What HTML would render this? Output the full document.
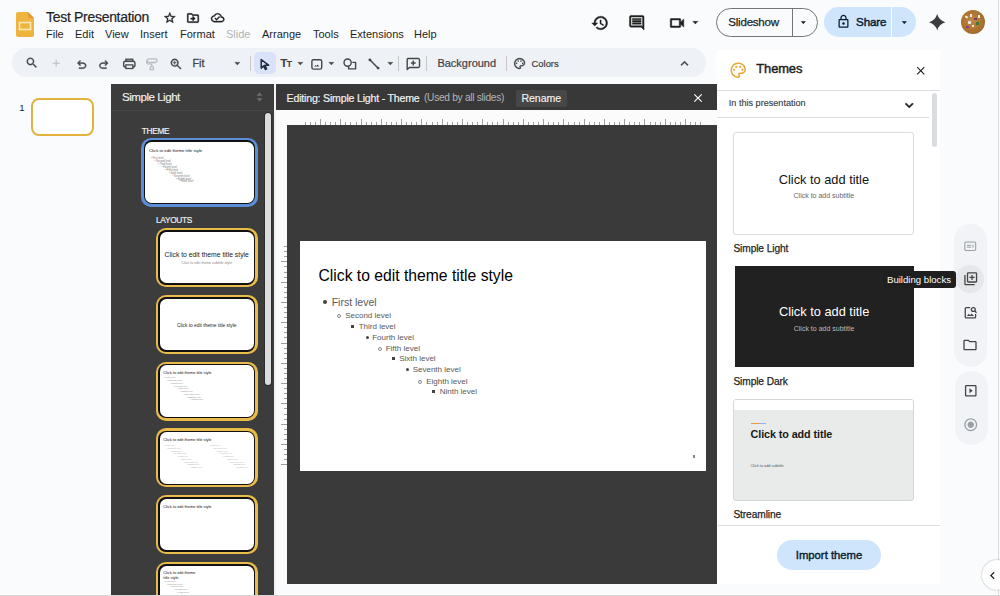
<!DOCTYPE html>
<html><head><meta charset="utf-8">
<style>
*{box-sizing:border-box;margin:0;padding:0}
html,body{width:1000px;height:596px;overflow:hidden;background:#f9fbfd;font-family:"Liberation Sans",sans-serif;color:#1f1f1f}
.a{position:absolute}
.t{position:absolute;white-space:nowrap;line-height:1}
svg{position:absolute;overflow:visible}
</style></head><body>
<!-- HEADER -->
<div id="hdr">
  <svg style="left:16px;top:12px" width="18" height="25" viewBox="0 0 18 25">
    <path d="M2 0H12L18 6V23A2 2 0 0 1 16 25H2A2 2 0 0 1 0 23V2A2 2 0 0 1 2 0Z" fill="#efb43e"/>
    <path d="M12 0L18 6H14A2 2 0 0 1 12 4Z" fill="#e39a36"/>
    <rect x="3.5" y="10.5" width="11" height="7" fill="none" stroke="#fbe9b9" stroke-width="1.6"/>
  </svg>
  <div class="t" style="left:46px;top:10px;font-size:14px;letter-spacing:-0.3px;color:#1f1f1f;-webkit-text-stroke:0.2px #1f1f1f">Test Presentation</div>
  
  <svg style="left:162.5px;top:10.9px" width="13.6" height="13.6" viewBox="0 0 24 24"><path fill="#1f1f1f" stroke="#1f1f1f" stroke-width="0.6" d="M22 9.24l-7.19-.62L12 2 9.19 8.63 2 9.24l5.46 4.73L5.82 21 12 17.27 18.18 21l-1.63-7.03L22 9.24zM12 15.4l-3.76 2.27 1-4.28-3.32-2.88 4.38-.38L12 6.1l1.71 4.04 4.38.38-3.32 2.88 1 4.28L12 15.4z"/></svg>
  <svg style="left:186px;top:10.6px" width="14" height="14" viewBox="0 0 24 24"><path fill="#1f1f1f" stroke="#1f1f1f" stroke-width="0.6" d="M20 6h-8l-2-2H4c-1.1 0-1.99.9-1.99 2L2 18c0 1.1.9 2 2 2h16c1.1 0 2-.9 2-2V8c0-1.1-.9-2-2-2zm0 12H4V6h5.17l2 2H20v10zm-7.84-6H8v2h4.16l-1.59 1.59L11.99 17 16 13.01 11.99 9l-1.41 1.41L12.16 12z"/></svg>
  <svg style="left:210.5px;top:10.6px" width="13.4" height="13.4" viewBox="0 0 24 24"><path fill="#1f1f1f" stroke="#1f1f1f" stroke-width="0.6" d="M19.35 10.04C18.67 6.59 15.640 4 12 4 9.11 4 6.6 5.64 5.35 8.04 2.34 8.36 0 10.91 0 14c0 3.31 2.69 6 6 6h13c2.76 0 5-2.24 5-5 0-2.640-2.05-4.78-4.65-4.96zM19 18H6c-2.21 0-4-1.79-4-4 0-2.05 1.53-3.76 3.56-3.97l1.07-.11.5-.95C8.08 7.14 9.94 6 12 6c2.62 0 4.88 1.86 5.39 4.43l.3 1.5 1.53.11c1.56.1 2.78 1.41 2.78 2.96 0 1.65-1.35 3-3 3zm-9-3.82l-2.09-2.09L6.5 13.5 10 17l6.010-6.01-1.41-1.41z"/></svg>
<div class="t" style="left:46px;top:29px;font-size:11px;color:#1f1f1f">File</div>
  <div class="t" style="left:75px;top:29px;font-size:11px">Edit</div>
  <div class="t" style="left:105px;top:29px;font-size:11px">View</div>
  <div class="t" style="left:140px;top:29px;font-size:11px">Insert</div>
  <div class="t" style="left:180px;top:29px;font-size:11px">Format</div>
  <div class="t" style="left:226px;top:29px;font-size:11px;color:#b0b3b8">Slide</div>
  <div class="t" style="left:262px;top:29px;font-size:11px">Arrange</div>
  <div class="t" style="left:313px;top:29px;font-size:11px">Tools</div>
  <div class="t" style="left:350px;top:29px;font-size:11px">Extensions</div>
  <div class="t" style="left:414px;top:29px;font-size:11px">Help</div>
</div>

<!-- TOOLBAR -->
<div class="a" style="left:12px;top:48px;width:694px;height:29px;border-radius:15px;background:#eef1f6"></div>
<div id="tb">
<svg style="left:25.3px;top:56.3px" width="13.7" height="13.7" viewBox="0 0 24 24"><path fill="#444746" stroke="#444746" stroke-width="0.55" d="M15.5 14h-.79l-.28-.27C15.41 12.59 16 11.11 16 9.5 16 5.910 13.09 3 9.5 3S3 5.91 3 9.5 5.91 16 9.5 16c1.61 0 3.09-.59 4.23-1.57l.27.28v.79l5 4.99L20.49 19l-4.99-5zm-6 0C7.01 14 5 11.99 5 9.5S7.01 5 9.5 5 14 7.01 14 9.5 11.99 14 9.5 14z"/></svg>
<svg style="left:50.2px;top:57.2px" width="12.3" height="12.3" viewBox="0 0 24 24"><path fill="#b9bcc1" d="M19 13h-6v6h-2v-6H5v-2h6V5h2v6h6v2z"/></svg>
<svg style="left:74.5px;top:58.1px" width="13.5" height="13.5" viewBox="0 -960 960 960"><path fill="#444746" stroke="#444746" stroke-width="22" d="M280-200v-80h284q63 0 109.5-40T720-420q0-60-46.5-100T564-560H312l104 104-56 56-200-200 200-200 56 56-104 104h252q97 0 166.5 63T800-420q0 94-69.5 157T564-200H280Z"/></svg>
<svg style="left:97.4px;top:58.1px" width="13.5" height="13.5" viewBox="0 -960 960 960"><path fill="#444746" stroke="#444746" stroke-width="22" d="M396-200q-97 0-166.5-63T160-420q0-94 69.5-157T396-640h252L544-744l56-56 200 200-200 200-56-56 104-104H396q-63 0-109.5 40T240-420q0 60 46.5 100T396-280h284v80H396Z"/></svg>
<svg style="left:120.6px;top:56.8px" width="15.6" height="13.8" viewBox="0 0 17 15"><rect x="2.9" y="4.6" width="12.3" height="6.3" rx="2" fill="none" stroke="#444746" stroke-width="1.5"/><rect x="5.3" y="2.4" width="7.6" height="2.4" fill="none" stroke="#444746" stroke-width="1.4"/><rect x="5.3" y="8.6" width="7.6" height="3.9" fill="#eef1f6" stroke="#444746" stroke-width="1.4"/></svg>
<svg style="left:144px;top:56px" width="15" height="16" viewBox="0 0 15 16"><rect x="3.2" y="2.9" width="9.8" height="3.6" rx="1.8" fill="none" stroke="#b9bcc1" stroke-width="1.3"/><path fill="none" stroke="#b9bcc1" stroke-width="1.2" d="M3.2 4.7C2.2 4.7 2.3 7.9 3.8 8H7.8V9.6"/><path fill="none" stroke="#b9bcc1" stroke-width="1.3" d="M7.8 9.8L9.4 11.8V13.6H6.2V11.8Z"/></svg>
<svg style="left:168.9px;top:56.7px" width="14.4" height="14.4" viewBox="0 0 24 24"><path fill="#444746" stroke="#444746" stroke-width="0.55" d="M15.5 14h-.79l-.28-.27C15.41 12.59 16 11.11 16 9.5 16 5.91 13.09 3 9.5 3S3 5.91 3 9.5 5.91 16 9.5 16c1.61 0 3.09-.59 4.23-1.57l.27.28v.79l5 4.99L20.49 19l-4.99-5zm-6 0C7.01 14 5 11.99 5 9.5S7.01 5 9.5 5 14 7.01 14 9.5 11.99 14 9.5 14zm.5-7H9v2H7v1h2v2h1v-2h2V9h-2z"/></svg>
<div class="t" style="left:192.5px;top:58.4px;font-size:10.8px;color:#444746;-webkit-text-stroke:0.3px #444746">Fit</div>
<svg style="left:230.7px;top:56.9px" width="12.7" height="12.7" viewBox="0 0 24 24"><path fill="#444746" stroke="#444746" stroke-width="0.55" d="M7 10l5 5 5-5z"/></svg>
<div class="a" style="left:250px;top:56px;width:1px;height:14.5px;background:#c7c7c7"></div>
<div class="a" style="left:254px;top:52px;width:22px;height:22px;border-radius:5px;background:#d9e2f8"></div>
<svg style="left:260px;top:58.5px" width="10" height="11" viewBox="0 0 10 11"><path fill="#d9e2f8" stroke="#1f2a44" stroke-width="1.5" stroke-linejoin="round" d="M1.2 0.6L8.6 6.2H4.9L6.6 9.9 5.4 10.5 3.6 6.9 1.2 9.1Z"/></svg>
<div class="t" style="left:280.2px;top:57.5px;font-size:11.8px;font-weight:700;color:#3c4043;letter-spacing:-0.9px">T<span style="font-size:9.2px">T</span></div>
<svg style="left:294px;top:56.9px" width="12.7" height="12.7" viewBox="0 0 24 24"><path fill="#444746" stroke="#444746" stroke-width="0.55" d="M7 10l5 5 5-5z"/></svg>
<svg style="left:309px;top:56.5px" width="15" height="14" viewBox="0 0 15 14"><rect x="2.9" y="2.7" width="9.8" height="9.4" rx="1.6" fill="none" stroke="#444746" stroke-width="1.4"/><path fill="#444746" d="M5.2 9.6L6.6 7.9 7.5 8.9 8.6 7.6 10.3 9.6Z"/></svg>
<svg style="left:324.6px;top:56.9px" width="12.7" height="12.7" viewBox="0 0 24 24"><path fill="#444746" stroke="#444746" stroke-width="0.55" d="M7 10l5 5 5-5z"/></svg>
<svg style="left:343px;top:58.3px" width="14" height="12" viewBox="0 0 14 12"><circle cx="4.6" cy="4.6" r="3.6" fill="none" stroke="#444746" stroke-width="1.4"/><path fill="none" stroke="#444746" stroke-width="1.4" stroke-linejoin="round" d="M9.3 4.4H12.6V10.9H5.6V8.7"/></svg>
<svg style="left:368px;top:57.8px" width="12" height="12" viewBox="0 0 12 12"><path stroke="#444746" stroke-width="1.5" d="M1.8 1.8L10.2 10.2"/><circle cx="1.9" cy="1.9" r="1.4" fill="#444746"/><circle cx="10.1" cy="10.1" r="1.4" fill="#444746"/></svg>
<svg style="left:384px;top:56.9px" width="12.7" height="12.7" viewBox="0 0 24 24"><path fill="#444746" stroke="#444746" stroke-width="0.55" d="M7 10l5 5 5-5z"/></svg>
<div class="a" style="left:398px;top:56px;width:1px;height:14.5px;background:#c7c7c7"></div>
<svg style="left:405px;top:57px" width="16" height="14" viewBox="0 0 16 14"><path fill="none" stroke="#444746" stroke-width="1.4" stroke-linejoin="round" d="M3 1.5H13.2A1.3 1.3 0 0 1 14.5 2.8V9.2A1.3 1.3 0 0 1 13.2 10.5H4.4L2.2 12.6V2.8A1.3 1.3 0 0 1 3 1.5Z"/><path stroke="#444746" stroke-width="1.4" d="M8.3 3.6V8.4M5.9 6H10.7"/></svg>
<div class="a" style="left:426px;top:56px;width:1px;height:14.5px;background:#c7c7c7"></div>
<div class="t" style="left:437.4px;top:57.8px;font-size:11px;color:#3c4043;-webkit-text-stroke:0.2px #3c4043">Background</div>
<div class="a" style="left:506px;top:56px;width:1px;height:14.5px;background:#c7c7c7"></div>
<svg style="left:513.4px;top:56.6px" width="13.2" height="13.2" viewBox="0 0 24 24"><path fill="#444746" stroke="#444746" stroke-width="0.55" d="M12 22C6.49 22 2 17.51 2 12S6.49 2 12 2s10 4.04 10 9c0 3.31-2.69 6-6 6h-1.77c-.28 0-.5.22-.5.5 0 .12.05.23.13.33.41.47.64 1.06.64 1.67 0 1.38-1.12 2.5-2.5 2.5zm0-18c-4.41 0-8 3.59-8 8s3.59 8 8 8c.28 0 .5-.22.5-.5 0-.16-.08-.28-.14-.35-.41-.46-.63-1.05-.63-1.650 0-1.38 1.12-2.5 2.5-2.5H16c2.21 0 4-1.79 4-4 0-3.86-3.59-7-8-7z"/><circle cx="6.5" cy="11.5" r="1.5" fill="#444746"/><circle cx="9.5" cy="7.5" r="1.5" fill="#444746"/><circle cx="14.5" cy="7.5" r="1.5" fill="#444746"/><circle cx="17.5" cy="11.5" r="1.5" fill="#444746"/></svg>
<div class="t" style="left:531.6px;top:58.6px;font-size:9.4px;color:#3c4043;-webkit-text-stroke:0.2px #3c4043">Colors</div>
<svg style="left:677.2px;top:56px" width="15" height="15" viewBox="0 0 24 24"><path fill="#444746" stroke="#444746" stroke-width="0.55" d="M12 8l-6 6 1.41 1.41L12 10.83l4.59 4.58L18 14z"/></svg>
</div>

<!-- FILMSTRIP -->
<div class="t" style="left:19.2px;top:103px;font-size:9.6px;color:#1f1f1f">1</div>
<div class="a" style="left:31px;top:98px;width:63px;height:38px;border:2px solid #e2b23c;border-radius:8px;background:#fff"></div>

<!-- DARK LAYOUT PANEL -->
<div class="a" style="left:111px;top:84px;width:162.5px;height:512px;background:#3c3c3c"></div>
<div class="a" style="left:111px;top:109.5px;width:163px;height:1px;background:#484848"></div>
<div class="t" style="left:122px;top:91.4px;font-size:11.6px;color:#f1f1f1;letter-spacing:-0.5px;-webkit-text-stroke:0.15px #f1f1f1">Simple Light</div>
<svg style="left:256px;top:92px" width="7" height="10" viewBox="0 0 7 10"><path fill="#6f6f6f" d="M3.5 0.5L6.5 3.8H0.5ZM3.5 9.5L6.5 6.2H0.5Z"/></svg>
<div class="a" style="left:264.5px;top:113px;width:6.5px;height:272px;border-radius:3.25px;background:#dcdcdc;box-shadow:0 0 0 1px #2e2e2e"></div>
<div class="a" style="left:273.5px;top:84px;width:2.5px;height:512px;background:#f2f2f2"></div>
<div class="t" style="left:141.7px;top:126.9px;font-size:8.3px;color:#ececec;letter-spacing:-0.3px;-webkit-text-stroke:0.2px #ececec">THEME</div>
<div class="t" style="left:156px;top:216px;font-size:8.3px;color:#ececec;letter-spacing:-0.3px;-webkit-text-stroke:0.2px #ececec">LAYOUTS</div>
<div class="a" style="left:141px;top:137.5px;width:116.5px;height:69.5px;border-radius:10px;background:#5a8fd8"></div><div class="a" style="left:143.6px;top:140.1px;width:111.3px;height:64.3px;border-radius:8px;background:#111"></div><div class="a" style="left:145px;top:141.5px;width:108.5px;height:61.5px;border-radius:6.5px;background:#fff;overflow:hidden"><div class="t" style="left:4px;top:7px;font-size:4.3px;color:#111">Click to edit theme title style</div><div class="t" style="left:5.8px;top:16.3px;font-size:2.6px;color:#777">• First level</div><div class="t" style="left:9.4px;top:19.2px;font-size:2.6px;color:#777">• Second level</div><div class="t" style="left:13.0px;top:22.2px;font-size:2.6px;color:#777">• Third level</div><div class="t" style="left:16.6px;top:25.2px;font-size:2.6px;color:#777">• Fourth level</div><div class="t" style="left:20.2px;top:28.1px;font-size:2.6px;color:#777">• Fifth level</div><div class="t" style="left:23.8px;top:31.1px;font-size:2.6px;color:#777">• Sixth level</div><div class="t" style="left:27.4px;top:34.0px;font-size:2.6px;color:#777">• Seventh level</div><div class="t" style="left:31.0px;top:37.0px;font-size:2.6px;color:#777">• Eighth level</div><div class="t" style="left:34.6px;top:39.9px;font-size:2.6px;color:#777">• Ninth level</div></div>
<div class="a" style="left:156px;top:228px;width:101.5px;height:59.2px;border-radius:10px;background:#e9bb4b"></div><div class="a" style="left:158.4px;top:230.4px;width:96.7px;height:54.4px;border-radius:8px;background:#111"></div><div class="a" style="left:159.8px;top:231.8px;width:93.9px;height:51.6px;border-radius:6.5px;background:#fff;overflow:hidden"><div class="t" style="left:0;width:93.9px;text-align:center;top:20.4px;font-size:6.8px;color:#222">Click to edit theme title style</div><div class="t" style="left:0;width:93.9px;text-align:center;top:30.2px;font-size:3.6px;color:#888">Click to edit theme subtitle style</div></div>
<div class="a" style="left:156px;top:294.8px;width:101.5px;height:59.2px;border-radius:10px;background:#e9bb4b"></div><div class="a" style="left:158.4px;top:297.2px;width:96.7px;height:54.4px;border-radius:8px;background:#111"></div><div class="a" style="left:159.8px;top:298.6px;width:93.9px;height:51.6px;border-radius:6.5px;background:#fff;overflow:hidden"><div class="t" style="left:0;width:93.9px;text-align:center;top:25.5px;font-size:4.8px;color:#222">Click to edit theme title style</div></div>
<div class="a" style="left:156px;top:361.5px;width:101.5px;height:59.2px;border-radius:10px;background:#e9bb4b"></div><div class="a" style="left:158.4px;top:363.9px;width:96.7px;height:54.4px;border-radius:8px;background:#111"></div><div class="a" style="left:159.8px;top:365.3px;width:93.9px;height:51.6px;border-radius:6.5px;background:#fff;overflow:hidden"><div class="t" style="left:3.5px;top:6.2px;font-size:3.9px;color:#111">Click to edit theme title style</div><div class="t" style="left:4.0px;top:12.2px;font-size:2.4px;color:#888">• First level</div><div class="t" style="left:7.3px;top:15.0px;font-size:2.4px;color:#888">• Second level</div><div class="t" style="left:10.6px;top:17.7px;font-size:2.4px;color:#888">• Third level</div><div class="t" style="left:13.9px;top:20.4px;font-size:2.4px;color:#888">• Fourth level</div><div class="t" style="left:17.2px;top:23.2px;font-size:2.4px;color:#888">• Fifth level</div><div class="t" style="left:20.5px;top:26.0px;font-size:2.4px;color:#888">• Sixth level</div><div class="t" style="left:23.8px;top:28.7px;font-size:2.4px;color:#888">• Seventh level</div><div class="t" style="left:27.1px;top:31.4px;font-size:2.4px;color:#888">• Eighth level</div><div class="t" style="left:30.4px;top:34.2px;font-size:2.4px;color:#888">• Ninth level</div></div>
<div class="a" style="left:156px;top:428.2px;width:101.5px;height:59.2px;border-radius:10px;background:#e9bb4b"></div><div class="a" style="left:158.4px;top:430.6px;width:96.7px;height:54.4px;border-radius:8px;background:#111"></div><div class="a" style="left:159.8px;top:432.0px;width:93.9px;height:51.6px;border-radius:6.5px;background:#fff;overflow:hidden"><div class="t" style="left:3.5px;top:6.2px;font-size:3.9px;color:#111">Click to edit theme title style</div><div class="t" style="left:4.0px;top:12.2px;font-size:2.2px;color:#aaa">• First level</div><div class="t" style="left:7.3px;top:15.0px;font-size:2.2px;color:#aaa">• Second level</div><div class="t" style="left:10.6px;top:17.7px;font-size:2.2px;color:#aaa">• Third level</div><div class="t" style="left:13.9px;top:20.4px;font-size:2.2px;color:#aaa">• Fourth level</div><div class="t" style="left:17.2px;top:23.2px;font-size:2.2px;color:#aaa">• Fifth level</div><div class="t" style="left:20.5px;top:26.0px;font-size:2.2px;color:#aaa">• Sixth level</div><div class="t" style="left:23.8px;top:28.7px;font-size:2.2px;color:#aaa">• Seventh level</div><div class="t" style="left:27.1px;top:31.4px;font-size:2.2px;color:#aaa">• Eighth level</div><div class="t" style="left:30.4px;top:34.2px;font-size:2.2px;color:#aaa">• Ninth level</div><div class="t" style="left:50.0px;top:12.2px;font-size:2.2px;color:#aaa">• First level</div><div class="t" style="left:53.3px;top:15.0px;font-size:2.2px;color:#aaa">• Second level</div><div class="t" style="left:56.6px;top:17.7px;font-size:2.2px;color:#aaa">• Third level</div><div class="t" style="left:59.9px;top:20.4px;font-size:2.2px;color:#aaa">• Fourth level</div><div class="t" style="left:63.2px;top:23.2px;font-size:2.2px;color:#aaa">• Fifth level</div><div class="t" style="left:66.5px;top:26.0px;font-size:2.2px;color:#aaa">• Sixth level</div><div class="t" style="left:69.8px;top:28.7px;font-size:2.2px;color:#aaa">• Seventh level</div><div class="t" style="left:73.1px;top:31.4px;font-size:2.2px;color:#aaa">• Eighth level</div><div class="t" style="left:76.4px;top:34.2px;font-size:2.2px;color:#aaa">• Ninth level</div></div>
<div class="a" style="left:156px;top:495px;width:101.5px;height:59.2px;border-radius:10px;background:#e9bb4b"></div><div class="a" style="left:158.4px;top:497.4px;width:96.7px;height:54.4px;border-radius:8px;background:#111"></div><div class="a" style="left:159.8px;top:498.8px;width:93.9px;height:51.6px;border-radius:6.5px;background:#fff;overflow:hidden"><div class="t" style="left:3.5px;top:6.2px;font-size:3.9px;color:#111">Click to edit theme title style</div></div>
<div class="a" style="left:156px;top:561.7px;width:101.5px;height:59.2px;border-radius:10px;background:#e9bb4b"></div><div class="a" style="left:158.4px;top:564.1px;width:96.7px;height:54.4px;border-radius:8px;background:#111"></div><div class="a" style="left:159.8px;top:565.5px;width:93.9px;height:51.6px;border-radius:6.5px;background:#fff;overflow:hidden"><div class="t" style="left:3.5px;top:5.5px;font-size:3.9px;color:#111;line-height:1.2">Click to edit theme<br>title style</div><div class="t" style="left:4.0px;top:15.2px;font-size:2.4px;color:#888">• First level</div><div class="t" style="left:7.3px;top:18.0px;font-size:2.4px;color:#888">• Second level</div><div class="t" style="left:10.6px;top:20.7px;font-size:2.4px;color:#888">• Third level</div><div class="t" style="left:13.9px;top:23.4px;font-size:2.4px;color:#888">• Fourth level</div><div class="t" style="left:17.2px;top:26.2px;font-size:2.4px;color:#888">• Fifth level</div><div class="t" style="left:20.5px;top:29.0px;font-size:2.4px;color:#888">• Sixth level</div><div class="t" style="left:23.8px;top:31.7px;font-size:2.4px;color:#888">• Seventh level</div><div class="t" style="left:27.1px;top:34.4px;font-size:2.4px;color:#888">• Eighth level</div><div class="t" style="left:30.4px;top:37.2px;font-size:2.4px;color:#888">• Ninth level</div></div>

<!-- EDIT AREA -->
<div class="a" style="left:276px;top:84px;width:441px;height:26px;background:#383838"></div>
<div class="t" style="left:286.6px;top:92.8px;font-size:10.6px;color:#f1f1f1;letter-spacing:-0.2px;-webkit-text-stroke:0.2px #f1f1f1">Editing: Simple Light - Theme</div>
<div class="t" style="left:424px;top:92.6px;font-size:10.2px;color:#b5b5b5;letter-spacing:-0.3px">(Used by all slides)</div>
<div class="a" style="left:515.5px;top:90px;width:51px;height:16.5px;background:#474747;border-radius:2px"></div>
<div class="t" style="left:521.5px;top:92.8px;font-size:10.6px;color:#f1f1f1;letter-spacing:-0.1px;-webkit-text-stroke:0.15px #f1f1f1">Rename</div>
<svg style="left:690.5px;top:91px" width="14" height="14" viewBox="0 0 24 24"><path fill="#fff" d="M19 6.41L17.59 5 12 10.590 6.41 5 5 6.41 10.59 12 5 17.59 6.41 19 12 13.41 17.59 19 19 17.59 13.41 12z"/></svg>
<div class="a" style="left:276px;top:110px;width:441px;height:474px;background:#fbfbfb"></div>
<div class="a" style="left:287px;top:125px;width:430px;height:459px;background:#3a3a3a"></div>
<div class="a" style="left:304.80px;top:122px;width:1px;height:3px;background:#9e9e9e"></div><div class="a" style="left:309.87px;top:122px;width:1px;height:3px;background:#9e9e9e"></div><div class="a" style="left:314.94px;top:122px;width:1px;height:3px;background:#9e9e9e"></div><div class="a" style="left:320.01px;top:119px;width:1px;height:6px;background:#9e9e9e"></div><div class="a" style="left:325.08px;top:122px;width:1px;height:3px;background:#9e9e9e"></div><div class="a" style="left:330.15px;top:122px;width:1px;height:3px;background:#9e9e9e"></div><div class="a" style="left:335.22px;top:122px;width:1px;height:3px;background:#9e9e9e"></div><div class="a" style="left:340.29px;top:119px;width:1px;height:6px;background:#9e9e9e"></div><div class="a" style="left:345.36px;top:122px;width:1px;height:3px;background:#9e9e9e"></div><div class="a" style="left:350.43px;top:122px;width:1px;height:3px;background:#9e9e9e"></div><div class="a" style="left:355.50px;top:122px;width:1px;height:3px;background:#9e9e9e"></div><div class="a" style="left:360.57px;top:119px;width:1px;height:6px;background:#9e9e9e"></div><div class="a" style="left:365.64px;top:122px;width:1px;height:3px;background:#9e9e9e"></div><div class="a" style="left:370.71px;top:122px;width:1px;height:3px;background:#9e9e9e"></div><div class="a" style="left:375.78px;top:122px;width:1px;height:3px;background:#9e9e9e"></div><div class="a" style="left:380.85px;top:119px;width:1px;height:6px;background:#9e9e9e"></div><div class="a" style="left:385.92px;top:122px;width:1px;height:3px;background:#9e9e9e"></div><div class="a" style="left:390.99px;top:122px;width:1px;height:3px;background:#9e9e9e"></div><div class="a" style="left:396.06px;top:122px;width:1px;height:3px;background:#9e9e9e"></div><div class="a" style="left:401.13px;top:119px;width:1px;height:6px;background:#9e9e9e"></div><div class="a" style="left:406.20px;top:122px;width:1px;height:3px;background:#9e9e9e"></div><div class="a" style="left:411.27px;top:122px;width:1px;height:3px;background:#9e9e9e"></div><div class="a" style="left:416.34px;top:122px;width:1px;height:3px;background:#9e9e9e"></div><div class="a" style="left:421.41px;top:119px;width:1px;height:6px;background:#9e9e9e"></div><div class="a" style="left:426.48px;top:122px;width:1px;height:3px;background:#9e9e9e"></div><div class="a" style="left:431.55px;top:122px;width:1px;height:3px;background:#9e9e9e"></div><div class="a" style="left:436.62px;top:122px;width:1px;height:3px;background:#9e9e9e"></div><div class="a" style="left:441.69px;top:119px;width:1px;height:6px;background:#9e9e9e"></div><div class="a" style="left:446.76px;top:122px;width:1px;height:3px;background:#9e9e9e"></div><div class="a" style="left:451.83px;top:122px;width:1px;height:3px;background:#9e9e9e"></div><div class="a" style="left:456.90px;top:122px;width:1px;height:3px;background:#9e9e9e"></div><div class="a" style="left:461.97px;top:119px;width:1px;height:6px;background:#9e9e9e"></div><div class="a" style="left:467.04px;top:122px;width:1px;height:3px;background:#9e9e9e"></div><div class="a" style="left:472.11px;top:122px;width:1px;height:3px;background:#9e9e9e"></div><div class="a" style="left:477.18px;top:122px;width:1px;height:3px;background:#9e9e9e"></div><div class="a" style="left:482.25px;top:119px;width:1px;height:6px;background:#9e9e9e"></div><div class="a" style="left:487.32px;top:122px;width:1px;height:3px;background:#9e9e9e"></div><div class="a" style="left:492.39px;top:122px;width:1px;height:3px;background:#9e9e9e"></div><div class="a" style="left:497.46px;top:122px;width:1px;height:3px;background:#9e9e9e"></div><div class="a" style="left:502.53px;top:119px;width:1px;height:6px;background:#9e9e9e"></div><div class="a" style="left:507.60px;top:122px;width:1px;height:3px;background:#9e9e9e"></div><div class="a" style="left:512.67px;top:122px;width:1px;height:3px;background:#9e9e9e"></div><div class="a" style="left:517.74px;top:122px;width:1px;height:3px;background:#9e9e9e"></div><div class="a" style="left:522.81px;top:119px;width:1px;height:6px;background:#9e9e9e"></div><div class="a" style="left:527.88px;top:122px;width:1px;height:3px;background:#9e9e9e"></div><div class="a" style="left:532.95px;top:122px;width:1px;height:3px;background:#9e9e9e"></div><div class="a" style="left:538.02px;top:122px;width:1px;height:3px;background:#9e9e9e"></div><div class="a" style="left:543.09px;top:119px;width:1px;height:6px;background:#9e9e9e"></div><div class="a" style="left:548.16px;top:122px;width:1px;height:3px;background:#9e9e9e"></div><div class="a" style="left:553.23px;top:122px;width:1px;height:3px;background:#9e9e9e"></div><div class="a" style="left:558.30px;top:122px;width:1px;height:3px;background:#9e9e9e"></div><div class="a" style="left:563.37px;top:119px;width:1px;height:6px;background:#9e9e9e"></div><div class="a" style="left:568.44px;top:122px;width:1px;height:3px;background:#9e9e9e"></div><div class="a" style="left:573.51px;top:122px;width:1px;height:3px;background:#9e9e9e"></div><div class="a" style="left:578.58px;top:122px;width:1px;height:3px;background:#9e9e9e"></div><div class="a" style="left:583.65px;top:119px;width:1px;height:6px;background:#9e9e9e"></div><div class="a" style="left:588.72px;top:122px;width:1px;height:3px;background:#9e9e9e"></div><div class="a" style="left:593.79px;top:122px;width:1px;height:3px;background:#9e9e9e"></div><div class="a" style="left:598.86px;top:122px;width:1px;height:3px;background:#9e9e9e"></div><div class="a" style="left:603.93px;top:119px;width:1px;height:6px;background:#9e9e9e"></div><div class="a" style="left:609.00px;top:122px;width:1px;height:3px;background:#9e9e9e"></div><div class="a" style="left:614.07px;top:122px;width:1px;height:3px;background:#9e9e9e"></div><div class="a" style="left:619.14px;top:122px;width:1px;height:3px;background:#9e9e9e"></div><div class="a" style="left:624.21px;top:119px;width:1px;height:6px;background:#9e9e9e"></div><div class="a" style="left:629.28px;top:122px;width:1px;height:3px;background:#9e9e9e"></div><div class="a" style="left:634.35px;top:122px;width:1px;height:3px;background:#9e9e9e"></div><div class="a" style="left:639.42px;top:122px;width:1px;height:3px;background:#9e9e9e"></div><div class="a" style="left:644.49px;top:119px;width:1px;height:6px;background:#9e9e9e"></div><div class="a" style="left:649.56px;top:122px;width:1px;height:3px;background:#9e9e9e"></div><div class="a" style="left:654.63px;top:122px;width:1px;height:3px;background:#9e9e9e"></div><div class="a" style="left:659.70px;top:122px;width:1px;height:3px;background:#9e9e9e"></div><div class="a" style="left:664.77px;top:119px;width:1px;height:6px;background:#9e9e9e"></div><div class="a" style="left:669.84px;top:122px;width:1px;height:3px;background:#9e9e9e"></div><div class="a" style="left:674.91px;top:122px;width:1px;height:3px;background:#9e9e9e"></div><div class="a" style="left:679.98px;top:122px;width:1px;height:3px;background:#9e9e9e"></div><div class="a" style="left:685.05px;top:119px;width:1px;height:6px;background:#9e9e9e"></div><div class="a" style="left:690.12px;top:122px;width:1px;height:3px;background:#9e9e9e"></div><div class="a" style="left:695.19px;top:122px;width:1px;height:3px;background:#9e9e9e"></div><div class="a" style="left:700.26px;top:122px;width:1px;height:3px;background:#9e9e9e"></div>
<div class="a" style="left:284px;top:246.20px;width:3px;height:1px;background:#9e9e9e"></div><div class="a" style="left:284px;top:251.27px;width:3px;height:1px;background:#9e9e9e"></div><div class="a" style="left:284px;top:256.34px;width:3px;height:1px;background:#9e9e9e"></div><div class="a" style="left:281px;top:261.41px;width:6px;height:1px;background:#9e9e9e"></div><div class="a" style="left:284px;top:266.48px;width:3px;height:1px;background:#9e9e9e"></div><div class="a" style="left:284px;top:271.55px;width:3px;height:1px;background:#9e9e9e"></div><div class="a" style="left:284px;top:276.62px;width:3px;height:1px;background:#9e9e9e"></div><div class="a" style="left:281px;top:281.69px;width:6px;height:1px;background:#9e9e9e"></div><div class="a" style="left:284px;top:286.76px;width:3px;height:1px;background:#9e9e9e"></div><div class="a" style="left:284px;top:291.83px;width:3px;height:1px;background:#9e9e9e"></div><div class="a" style="left:284px;top:296.90px;width:3px;height:1px;background:#9e9e9e"></div><div class="a" style="left:281px;top:301.97px;width:6px;height:1px;background:#9e9e9e"></div><div class="a" style="left:284px;top:307.04px;width:3px;height:1px;background:#9e9e9e"></div><div class="a" style="left:284px;top:312.11px;width:3px;height:1px;background:#9e9e9e"></div><div class="a" style="left:284px;top:317.18px;width:3px;height:1px;background:#9e9e9e"></div><div class="a" style="left:281px;top:322.25px;width:6px;height:1px;background:#9e9e9e"></div><div class="a" style="left:284px;top:327.32px;width:3px;height:1px;background:#9e9e9e"></div><div class="a" style="left:284px;top:332.39px;width:3px;height:1px;background:#9e9e9e"></div><div class="a" style="left:284px;top:337.46px;width:3px;height:1px;background:#9e9e9e"></div><div class="a" style="left:281px;top:342.53px;width:6px;height:1px;background:#9e9e9e"></div><div class="a" style="left:284px;top:347.60px;width:3px;height:1px;background:#9e9e9e"></div><div class="a" style="left:284px;top:352.67px;width:3px;height:1px;background:#9e9e9e"></div><div class="a" style="left:284px;top:357.74px;width:3px;height:1px;background:#9e9e9e"></div><div class="a" style="left:281px;top:362.81px;width:6px;height:1px;background:#9e9e9e"></div><div class="a" style="left:284px;top:367.88px;width:3px;height:1px;background:#9e9e9e"></div><div class="a" style="left:284px;top:372.95px;width:3px;height:1px;background:#9e9e9e"></div><div class="a" style="left:284px;top:378.02px;width:3px;height:1px;background:#9e9e9e"></div><div class="a" style="left:281px;top:383.09px;width:6px;height:1px;background:#9e9e9e"></div><div class="a" style="left:284px;top:388.16px;width:3px;height:1px;background:#9e9e9e"></div><div class="a" style="left:284px;top:393.23px;width:3px;height:1px;background:#9e9e9e"></div><div class="a" style="left:284px;top:398.30px;width:3px;height:1px;background:#9e9e9e"></div><div class="a" style="left:281px;top:403.37px;width:6px;height:1px;background:#9e9e9e"></div><div class="a" style="left:284px;top:408.44px;width:3px;height:1px;background:#9e9e9e"></div><div class="a" style="left:284px;top:413.51px;width:3px;height:1px;background:#9e9e9e"></div><div class="a" style="left:284px;top:418.58px;width:3px;height:1px;background:#9e9e9e"></div><div class="a" style="left:281px;top:423.65px;width:6px;height:1px;background:#9e9e9e"></div><div class="a" style="left:284px;top:428.72px;width:3px;height:1px;background:#9e9e9e"></div><div class="a" style="left:284px;top:433.79px;width:3px;height:1px;background:#9e9e9e"></div><div class="a" style="left:284px;top:438.86px;width:3px;height:1px;background:#9e9e9e"></div><div class="a" style="left:281px;top:443.93px;width:6px;height:1px;background:#9e9e9e"></div><div class="a" style="left:284px;top:449.00px;width:3px;height:1px;background:#9e9e9e"></div><div class="a" style="left:284px;top:454.07px;width:3px;height:1px;background:#9e9e9e"></div><div class="a" style="left:284px;top:459.14px;width:3px;height:1px;background:#9e9e9e"></div><div class="a" style="left:281px;top:464.21px;width:6px;height:1px;background:#9e9e9e"></div>
<div class="a" style="left:300px;top:241px;width:406px;height:229.5px;background:#fff"></div>
<div class="t" style="left:318.5px;top:268px;font-size:15.7px;color:#000">Click to edit theme title style</div>
<div class="t" style="left:331.7px;top:296.71px;font-size:10.5px;color:#595959">First level</div><div class="a" style="left:323.3px;top:300.00px;width:4px;height:4px;border-radius:50%;background:#444"></div><div class="t" style="left:345.2px;top:311.83px;font-size:8px;color:#595959">Second level</div><div class="a" style="left:337.2px;top:314.00px;width:4.2px;height:4.2px;border-radius:50%;border:0.9px solid #8a8a8a"></div><div class="t" style="left:358.7px;top:323.03px;font-size:8px;color:#595959">Third level</div><div class="a" style="left:351px;top:324.50px;width:3.2px;height:3.2px;background:#444"></div><div class="t" style="left:372.2px;top:334.33px;font-size:8px;color:#595959">Fourth level</div><div class="a" style="left:365.7px;top:335.80px;width:3.2px;height:3.2px;border-radius:50%;background:#444"></div><div class="t" style="left:385.7px;top:344.63px;font-size:8px;color:#595959">Fifth level</div><div class="a" style="left:377.7px;top:346.80px;width:4.2px;height:4.2px;border-radius:50%;border:0.9px solid #8a8a8a"></div><div class="t" style="left:399.2px;top:355.43px;font-size:8px;color:#595959">Sixth level</div><div class="a" style="left:391.5px;top:356.90px;width:3.2px;height:3.2px;background:#444"></div><div class="t" style="left:412.7px;top:366.23px;font-size:8px;color:#595959">Seventh level</div><div class="a" style="left:406.2px;top:367.70px;width:3.2px;height:3.2px;border-radius:50%;background:#444"></div><div class="t" style="left:426.2px;top:377.53px;font-size:8px;color:#595959">Eighth level</div><div class="a" style="left:418.2px;top:379.70px;width:4.2px;height:4.2px;border-radius:50%;border:0.9px solid #8a8a8a"></div><div class="t" style="left:439.7px;top:388.33px;font-size:8px;color:#595959">Ninth level</div><div class="a" style="left:432px;top:389.80px;width:3.2px;height:3.2px;background:#444"></div>
<div class="a" style="left:693px;top:455px;width:2px;height:3px;background:#888"></div>
<!-- THEMES PANEL -->
<div class="a" style="left:717px;top:50px;width:223px;height:534px;background:#fff"></div>
<svg style="left:729.4px;top:60.9px" width="18.5" height="18.5" viewBox="0 0 24 24"><path fill="#eaa732" d="M12 22C6.49 22 2 17.51 2 12S6.49 2 12 2s10 4.04 10 9c0 3.31-2.690 6-6 6h-1.77c-.28 0-.5.22-.5.5 0 .12.05.23.13.33.41.47.64 1.06.64 1.67 0 1.38-1.12 2.5-2.5 2.5zm0-18c-4.41 0-8 3.59-8 8s3.59 8 8 8c.28 0 .5-.22.5-.5 0-.16-.08-.28-.14-.35-.41-.46-.63-1.05-.63-1.65 0-1.38 1.12-2.5 2.5-2.5H16c2.21 0 4-1.79 4-4 0-3.86-3.59-7-8-7z"/><circle cx="6.5" cy="11.5" r="1.5" fill="#eaa732"/><circle cx="9.5" cy="7.5" r="1.5" fill="#eaa732"/><circle cx="14.5" cy="7.5" r="1.5" fill="#eaa732"/><circle cx="17.5" cy="11.5" r="1.5" fill="#eaa732"/></svg>
<div class="t" style="left:756.3px;top:63.2px;font-size:12.9px;color:#1f1f1f;letter-spacing:-0.1px;-webkit-text-stroke:0.45px #1f1f1f">Themes</div>
<svg style="left:913.5px;top:63.5px" width="13.5" height="13.5" viewBox="0 0 24 24"><path fill="#1f1f1f" d="M19 6.41L17.59 5 12 10.59 6.41 5 5 6.41 10.59 12 5 17.59 6.41 19 12 13.41 17.59 19 19 17.59 13.41 12z"/></svg>
<div class="a" style="left:717px;top:90px;width:223px;height:1px;background:#dadce0"></div>
<div class="t" style="left:728.8px;top:98.8px;font-size:9.1px;color:#3c4043;-webkit-text-stroke:0.15px #3c4043">In this presentation</div>
<svg style="left:901px;top:97.2px" width="16.5" height="16.5" viewBox="0 0 24 24"><path fill="#1f1f1f" stroke="#1f1f1f" stroke-width="0.7" d="M16.59 8.59L12 13.17 7.41 8.59 6 10l6 6 6-6z"/></svg>
<div class="a" style="left:717px;top:116.5px;width:212px;height:1px;background:#dadce0"></div>
<div class="a" style="left:932px;top:93px;width:5px;height:54px;border-radius:2.5px;background:#dadce0"></div>

<div class="a" style="left:733.4px;top:132.3px;width:181px;height:103px;border:1.3px solid #dadce0;border-radius:3px;background:#fff"></div>
<div class="t" style="left:733.4px;width:181px;text-align:center;top:174.2px;font-size:12.8px;color:#111">Click to add title</div>
<div class="t" style="left:733.4px;width:181px;text-align:center;top:192px;font-size:7px;color:#666">Click to add subtitle</div>
<div class="t" style="left:733.4px;top:244.0px;font-size:10.2px;color:#1f1f1f;letter-spacing:-0.1px;-webkit-text-stroke:0.25px #1f1f1f">Simple Light</div>

<div class="a" style="left:734.6px;top:266.4px;width:179px;height:101px;background:#212121"></div>
<div class="t" style="left:734.6px;width:179px;text-align:center;top:306.4px;font-size:12.8px;color:#fff">Click to add title</div>
<div class="t" style="left:734.6px;width:179px;text-align:center;top:325px;font-size:7px;color:#bbb">Click to add subtitle</div>
<div class="t" style="left:733.4px;top:377.2px;font-size:10.2px;color:#1f1f1f;letter-spacing:-0.1px;-webkit-text-stroke:0.25px #1f1f1f">Simple Dark</div>

<div class="a" style="left:733px;top:398.6px;width:181.4px;height:102.7px;border:1.2px solid #d6d6d6;border-radius:3px;background:#e9ebeb;overflow:hidden"><div class="a" style="left:0;top:0;width:100%;height:10px;background:#fff"></div></div>
<div class="a" style="left:750.6px;top:422.6px;width:8px;height:1.4px;background:#f29a3a"></div>
<div class="a" style="left:758.6px;top:422.6px;width:7px;height:1.4px;background:#8ab4f8"></div>
<div class="t" style="left:750.6px;top:428.6px;font-size:10.8px;font-weight:700;color:#1a1a1a;letter-spacing:-0.1px">Click to add title</div>
<div class="t" style="left:750.6px;top:464.5px;font-size:3.8px;color:#555">Click to add subtitle</div>
<div class="t" style="left:733.4px;top:509.6px;font-size:10.2px;color:#1f1f1f;letter-spacing:-0.1px;-webkit-text-stroke:0.25px #1f1f1f">Streamline</div>

<div class="a" style="left:718px;top:524.5px;width:222px;height:1px;background:#dadce0"></div>
<div class="a" style="left:777.2px;top:540.3px;width:103.7px;height:29.4px;border-radius:15px;background:#cfe5fb"></div>
<div class="t" style="left:777.2px;width:103.7px;text-align:center;top:549.8px;font-size:11.3px;color:#0b1d33;letter-spacing:0px;-webkit-text-stroke:0.4px #0b1d33">Import theme</div>

<!-- RIGHT STRIP -->
<div class="a" style="left:954px;top:224px;width:33px;height:143px;border-radius:16.5px;background:#f1f3f6"></div>
<div class="a" style="left:956.4px;top:265.3px;width:27.6px;height:27.6px;border-radius:50%;background:#e5e7ea"></div>
<div class="a" style="left:954.5px;top:371px;width:33px;height:74px;border-radius:16.5px;background:#f1f3f6"></div>
<svg style="left:962.5px;top:238.5px" width="14.5" height="14.5" viewBox="0 0 24 24"><rect x="3" y="5" width="18" height="14" rx="2" fill="none" stroke="#9aa0a6" stroke-width="1.8"/><path stroke="#9aa0a6" stroke-width="1.6" d="M6.5 10.5h7M6.5 13.5h7M16.5 9.5v5"/></svg>
<svg style="left:962.5px;top:270.5px" width="15.5" height="15.5" viewBox="0 0 24 24"><path fill="#444746" d="M4 6H2v14c0 1.1.9 2 2 2h14v-2H4V6zm16-4H8c-1.1 0-2 .9-2 2v12c0 1.1.9 2 2 2h12c1.1 0 2-.9 2-2V4c0-1.1-.9-2-2-2zm0 14H8V4h12v12zm-7-2h2v-3h3V9h-3V6h-2v3h-3v2h3z"/></svg>
<svg style="left:962.5px;top:304.5px" width="15.5" height="15.5" viewBox="0 0 24 24"><path fill="none" stroke="#444746" stroke-width="2" d="M11 4H5a1.5 1.5 0 0 0-1.5 1.5v13A1.5 1.5 0 0 0 5 20h13a1.5 1.5 0 0 0 1.5-1.5V14"/><circle cx="16" cy="7" r="3" fill="none" stroke="#444746" stroke-width="2"/><path stroke="#444746" stroke-width="2" d="M18.2 9.2L21 12"/><path fill="#444746" d="M6 17l3-3.5 2 2.2 2.3-2.7L17 17z"/></svg>
<svg style="left:962px;top:336.5px" width="16" height="16" viewBox="0 0 24 24"><path fill="#444746" d="M9.17 6l2 2H20v10H4V6h5.17M10 4H4c-1.1 0-1.99.9-1.99 2L2 18c0 1.1.9 2 2 2h16c1.1 0 2-.9 2-2V8c0-1.1-.9-2-2-2h-8l-2-2z"/></svg>
<svg style="left:962.5px;top:383.4px" width="15.5" height="15.5" viewBox="0 0 24 24"><path fill="#444746" d="M10 8v8l5-4-5-4zm9-5H5c-1.1 0-2 .9-2 2v14c0 1.1.9 2 2 2h14c1.1 0 2-.9 2-2V5c0-1.1-.9-2-2-2zm0 16H5V5h14v14z"/></svg>
<svg style="left:962.5px;top:416.5px" width="15.5" height="15.5" viewBox="0 0 24 24"><path fill="#9aa0a6" d="M12 7c-2.76 0-5 2.24-5 5s2.24 5 5 5 5-2.24 5-5-2.24-5-5-5zm0-5C6.48 2 2 6.48 2 12s4.48 10 10 10 10-4.48 10-10S17.52 2 12 2zm0 18c-4.42 0-8-3.580-8-8s3.58-8 8-8 8 3.58 8 8-3.58 8-8 8z"/></svg>
<!-- tooltip -->
<div class="a" style="left:883px;top:270.5px;width:73px;height:17.5px;border-radius:3px;background:#1f1f1f"></div>
<div class="t" style="left:887px;top:274.5px;font-size:9.6px;color:#fff">Building blocks</div>
<!-- collapse btn -->
<div class="a" style="left:998px;top:0;width:1px;height:596px;background:#dcdcdc"></div>
<div class="a" style="left:981.5px;top:560px;width:30px;height:30px;border-radius:50%;background:#fff;box-shadow:0 0 2px rgba(0,0,0,0.35)"></div>
<svg style="left:984.5px;top:567.5px" width="15" height="15" viewBox="0 0 24 24"><path fill="#1f1f1f" d="M15.41 7.41L14 6l-6 6 6 6 1.41-1.41L10.83 12z"/></svg>
<div class="a" style="left:0;top:595px;width:1000px;height:1px;background:#d6d6d6"></div>

<!-- HEADER RIGHT -->
<svg style="left:590.5px;top:13.5px" width="18" height="18" viewBox="0 0 24 24"><path fill="#1f1f1f" stroke="#1f1f1f" stroke-width="0.6" d="M13 3c-4.97 0-9 4.03-9 9H1l3.89 3.89.07.14L9 12H6c0-3.87 3.13-7 7-7s7 3.13 7 7-3.13 7-7 7c-1.93 0-3.68-.79-4.94-2.06l-1.42 1.42C8.27 19.99 10.51 21 13 21c4.97 0 9-4.03 9-9s-4.03-9-9-9zm-1 5v5l4.28 2.54.72-1.21-3.5-2.08V8H12z"/></svg>
<svg style="left:628px;top:13.8px" width="17.5" height="17.5" viewBox="0 0 24 24"><path fill="#1f1f1f" stroke="#1f1f1f" stroke-width="0.6" d="M21.99 4c0-1.1-.89-2-1.99-2H4c-1.1 0-2 .9-2 2v12c0 1.1.9 2 2 2h14l4 4-.01-18zM20 4v13.17L18.83 16H4V4h16zM6 12h12v2H6zm0-3h12v2H6zm0-3h12v2H6z"/></svg>
<svg style="left:668px;top:13.5px" width="18" height="18" viewBox="0 0 24 24"><path fill="#1f1f1f" stroke="#1f1f1f" stroke-width="0.6" d="M15 8v8H5V8h10m1-2H4c-.55 0-1 .45-1 1v10c0 .55.45 1 1 1h12c.55 0 1-.45 1-1v-3.5l4 4v-11l-4 4V7c0-.55-.45-1-1-1z"/></svg>
<svg style="left:689px;top:16px" width="12.7" height="12.7" viewBox="0 0 24 24"><path fill="#1f1f1f" stroke="#1f1f1f" stroke-width="0.6" d="M7 10l5 5 5-5z"/></svg>
<div class="a" style="left:715.5px;top:7.5px;width:102.5px;height:29.5px;border:1.2px solid #747775;border-radius:15px"></div>
<div class="a" style="left:791.5px;top:8px;width:1px;height:28.5px;background:#747775"></div>
<div class="t" style="left:728.3px;top:15.8px;font-size:11.6px;color:#1f1f1f;letter-spacing:-0.25px;-webkit-text-stroke:0.25px #1f1f1f">Slideshow</div>
<svg style="left:797.2px;top:16px" width="12.7" height="12.7" viewBox="0 0 24 24"><path fill="#1f1f1f" d="M7 10l5 5 5-5z"/></svg>
<div class="a" style="left:824.3px;top:7.4px;width:92.1px;height:29.2px;border-radius:15px;background:#cfe5fb"></div>
<div class="a" style="left:891.3px;top:7.4px;width:1px;height:29.2px;background:#f9fbfd"></div>
<svg style="left:835.5px;top:14.2px" width="15" height="15" viewBox="0 0 24 24"><path fill="#001d35" d="M18 8h-1V6c0-2.76-2.24-5-5-5S7 3.24 7 6v2H6c-1.1 0-2 .9-2 2v10c0 1.1.9 2 2 2h12c1.1 0 2-.9 2-2V10c0-1.1-.9-2-2-2zM9 6c0-1.66 1.34-3 3-3s3 1.34 3 3v2H9V6zm9 14H6V10h12v10zm-6-3c1.1 0 2-.9 2-2s-.9-2-2-2-2 .9-2 2 .9 2 2 2z"/></svg>
<div class="t" style="left:856px;top:15.8px;font-size:11.6px;color:#0b1d33;letter-spacing:-0.1px;-webkit-text-stroke:0.45px #0b1d33">Share</div>
<svg style="left:897.5px;top:16px" width="12.7" height="12.7" viewBox="0 0 24 24"><path fill="#001d35" d="M7 10l5 5 5-5z"/></svg>
<svg style="left:929.3px;top:14.2px" width="16.4" height="16.4" viewBox="0 0 24 24"><path fill="#3c3c3c" d="M12 0Q14.6 9.4 24 12Q14.6 14.6 12 24Q9.4 14.6 0 12Q9.4 9.4 12 0Z"/></svg>
<div class="a" style="left:961.3px;top:10.2px;width:24px;height:24px;border-radius:50%;overflow:hidden;background:radial-gradient(circle at 45% 45%,#c08a4a,#a8702e 60%,#8a5a2a)">
<div class="a" style="left:4px;top:6px;width:3px;height:2px;background:#f4efe6;transform:rotate(30deg)"></div>
<div class="a" style="left:9px;top:4px;width:2px;height:3px;background:#efe9df"></div>
<div class="a" style="left:13px;top:8px;width:3px;height:2px;background:#7d3b6e"></div>
<div class="a" style="left:7px;top:11px;width:3px;height:3px;background:#f0ebe2;border-radius:1px"></div>
<div class="a" style="left:15px;top:12px;width:3px;height:3px;background:#3d7a3a"></div>
<div class="a" style="left:11px;top:15px;width:2px;height:2px;background:#ece6da"></div>
<div class="a" style="left:5px;top:16px;width:3px;height:2px;background:#8a3f7a"></div>
<div class="a" style="left:17px;top:5px;width:2px;height:3px;background:#f1ece3"></div>
</div>
</body></html>
